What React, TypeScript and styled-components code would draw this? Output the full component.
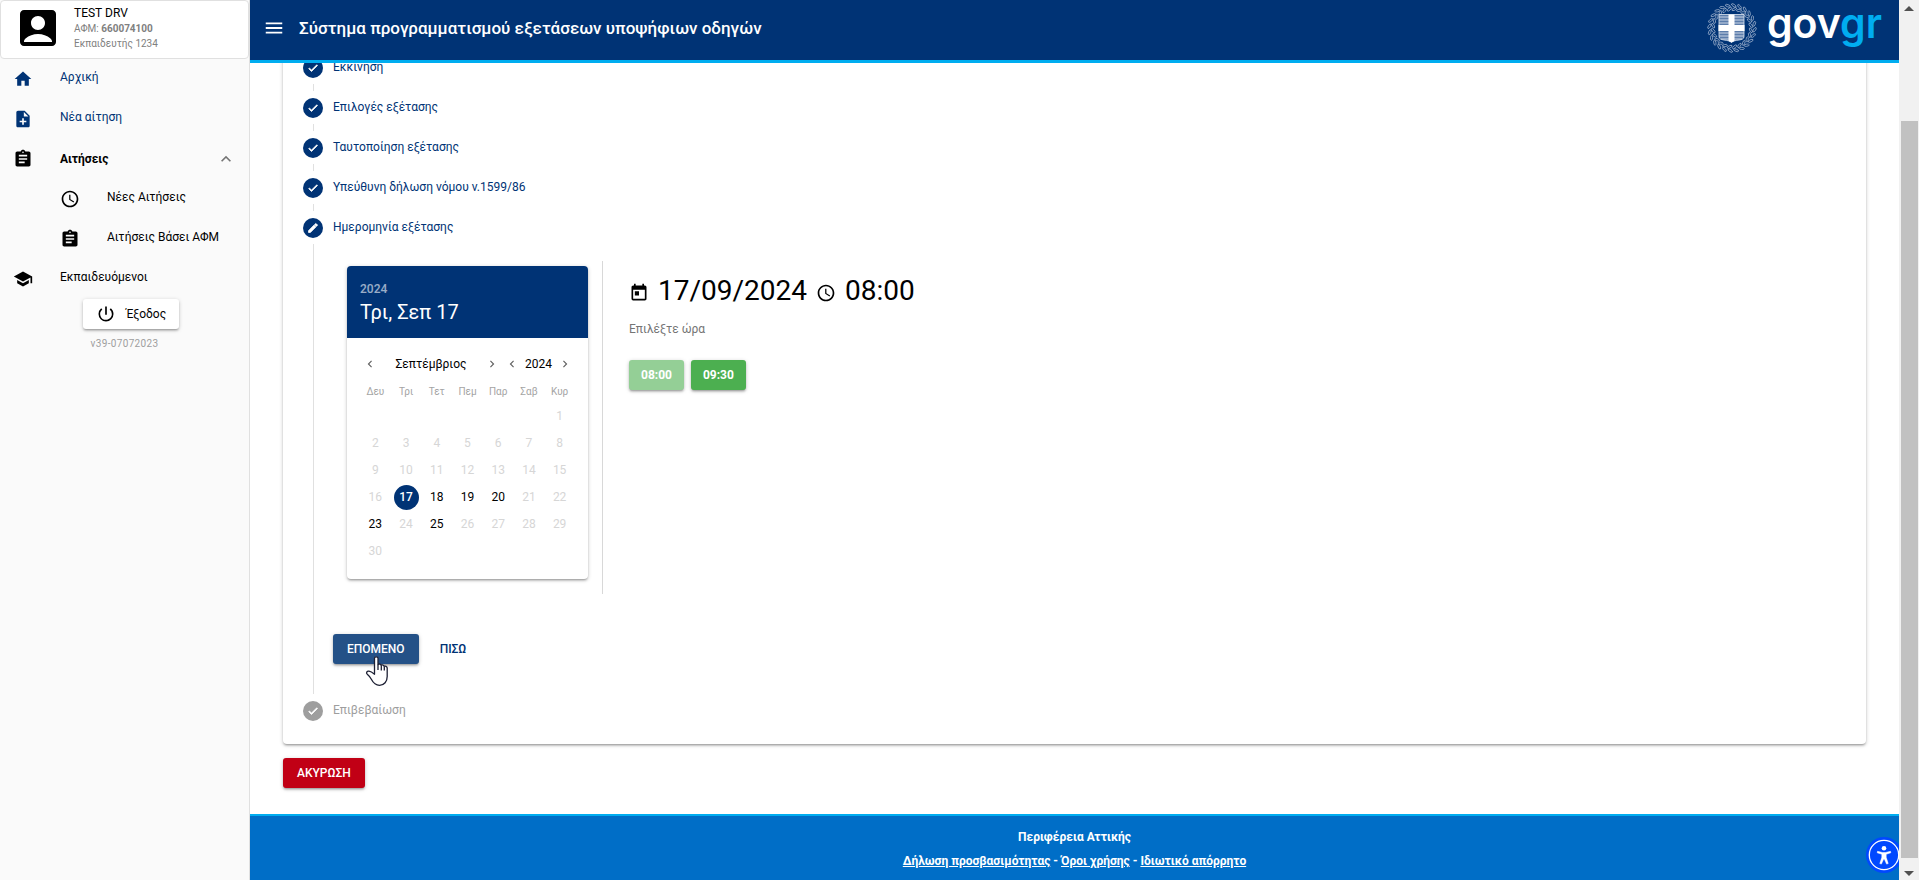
import React from "react";
import styled, { createGlobalStyle, css } from "styled-components";
import {
  MdAccountBox,
  MdAssignment,
  MdCheck,
  MdChevronLeft,
  MdChevronRight,
  MdEdit,
  MdExpandLess,
  MdHome,
  MdMenu,
  MdNoteAdd,
  MdPowerSettingsNew,
  MdSchedule,
  MdSchool,
  MdToday,
} from "react-icons/md";

const navy = "#003375";
const sky = "#00adf0";
const line = "#e0e0e0";
const raised =
  "0 1px 4px rgba(0,0,0,.2), 0 2px 2px rgba(0,0,0,.14), 0 2px 1px -1px rgba(0,0,0,.12)";

const GlobalStyle = createGlobalStyle`
  *, *::before, *::after { box-sizing: border-box; }
  body {
    margin: 0;
    font-family: Roboto, "Liberation Sans", sans-serif;
    font-size: 12px;
    line-height: 18px;
    color: #000;
    background: #fff;
  }
  button { font: inherit; color: inherit; border: 0; background: none; padding: 0; cursor: pointer; }
  a { color: inherit; }
  h1, h2, p { margin: 0; }
  svg { display: block; flex: none; }
`;

const Shell = styled.div`
  display: flex;
  height: 100vh;
  overflow: hidden;
`;

/* ---------- sidebar ---------- */

const Sidebar = styled.aside`
  flex: none;
  width: 250px;
  background: #fafafa;
  border-right: 1px solid ${line};
`;

const UserCard = styled.div`
  display: flex;
  align-items: center;
  gap: 12px;
  height: 59px;
  padding: 0 0 3px 13px;
  background: #fff;
  border: 1px solid ${line};
  border-radius: 4px;
`;

const UserName = styled.div`
  line-height: 16px;
`;

const UserMeta = styled.div`
  font-size: 10px;
  line-height: 15px;
  color: #808080;
`;

const NavLink = styled.a<{ $tone?: "navy" | "strong"; $nested?: boolean }>`
  display: flex;
  align-items: center;
  gap: 27px;
  height: 40px;
  padding: 0 13px 0 ${(p) => (p.$nested ? 60 : 13)}px;
  text-decoration: none;
  color: ${(p) => (p.$tone === "navy" ? navy : "#000")};
  font-weight: ${(p) => (p.$tone === "strong" ? 700 : 400)};
`;

const NavText = styled.span<{ $centered?: boolean }>`
  flex: 1;
  padding-bottom: ${(p) => (p.$centered ? 0 : 4)}px;
`;

const Chevron = styled(MdExpandLess)`
  color: #757575;
`;

const LogoutArea = styled.div`
  display: flex;
  flex-direction: column;
  align-items: center;
  margin-left: 13px;
`;

const LogoutButton = styled.button`
  display: flex;
  align-items: center;
  gap: 10px;
  height: 30px;
  padding: 0 13px;
  background: #fff;
  border-radius: 3px;
  box-shadow: ${raised};
`;

const Version = styled.div`
  margin-top: 6px;
  margin-right: 13px;
  font-size: 10px;
  letter-spacing: 0.03333em;
  color: #9e9e9e;
`;

/* ---------- main column ---------- */

const Column = styled.div`
  position: relative;
  flex: 1;
  min-width: 0;
  display: flex;
  flex-direction: column;
  overflow: hidden;
`;

const TopBar = styled.header`
  flex: none;
  display: flex;
  align-items: center;
  gap: 14px;
  height: 63px;
  padding: 0 17px 4px 13px;
  background: ${navy};
  border-bottom: 3px solid ${sky};
  color: #fff;
`;

const Title = styled.h1`
  flex: 1;
  font-size: 17px;
  line-height: 24px;
  font-weight: 500;
`;

const Brand = styled.div`
  display: flex;
  align-items: center;
  gap: 10px;
`;

const Wordmark = styled.div`
  padding-bottom: 10px;
  font-family: Inter, sans-serif;
  font-size: 41px;
  line-height: 46px;
  font-weight: 600;
  span { color: ${sky}; }
`;

/* The page is scrolled to its end, so content hangs from the bottom edge. */
const Viewport = styled.main`
  flex: 1;
  min-height: 0;
  display: flex;
  flex-direction: column;
  justify-content: flex-end;
  overflow: hidden;
  padding: 0 33px 26px;
`;

const Card = styled.section`
  flex: none;
  margin-bottom: 14px;
  padding: 20px 20px 13px;
  border-radius: 4px;
  box-shadow: ${raised};
`;

const StepHead = styled.div<{ $muted?: boolean }>`
  display: flex;
  align-items: center;
  gap: 10px;
  height: 40px;
  color: ${(p) => (p.$muted ? "#9e9e9e" : navy)};
`;

const StepDot = styled.span<{ $muted?: boolean }>`
  display: flex;
  align-items: center;
  justify-content: center;
  width: 20px;
  height: 20px;
  border-radius: 50%;
  color: #fff;
  background: ${(p) => (p.$muted ? "#9e9e9e" : navy)};
  path:last-child { stroke: #fff; stroke-width: 1.5; }
`;

const StepText = styled.span`
  padding-bottom: 2px;
`;

const StepItem = styled.div`
  position: relative;
  &:not(:last-child)::after {
    content: "";
    position: absolute;
    left: 10px;
    top: 36px;
    bottom: -3px;
    width: 1px;
    background: ${line};
  }
`;

const StepBody = styled.div`
  padding: 13px 0 27px 30px;
`;

const Booking = styled.div`
  display: flex;
`;

const DateSide = styled.div`
  padding: 5px 14px 15px;
  border-right: 1px solid #d8d8d8;
`;

const Picker = styled.div`
  width: 241px;
  border-radius: 4px;
  box-shadow: ${raised};
`;

const PickerHead = styled.div`
  height: 72px;
  padding: 14px 13px;
  border-radius: 4px 4px 0 0;
  background: ${navy};
  color: #fff;
`;

const PickerYear = styled.div`
  font-weight: 500;
  opacity: 0.6;
`;

const PickerDate = styled.div`
  font-size: 20px;
  line-height: 28px;
`;

const PickerBody = styled.div`
  padding: 13px 13px 14px;
`;

const PickerNav = styled.div`
  display: flex;
  align-items: center;
  height: 26px;
`;

const ArrowButton = styled.button`
  display: flex;
  justify-content: center;
  width: 20px;
  color: #616161;
`;

const NavLabel = styled.button<{ $grow?: boolean }>`
  ${(p) => (p.$grow ? css`flex: 1;` : css`width: 33px;`)}
`;

const Week = styled.div`
  display: grid;
  grid-template-columns: repeat(7, 1fr);
`;

const WeekDay = styled.span`
  height: 26px;
  text-align: center;
  font-size: 10px;
  line-height: 30px;
  color: #a4a4a4;
`;

const DayCell = styled.div`
  display: flex;
  align-items: center;
  justify-content: center;
  height: 27px;
`;

const Day = styled.button<{ $picked?: boolean }>`
  width: 25px;
  height: 25px;
  border-radius: 50%;
  line-height: 25px;
  &:disabled { color: #d6d6d6; cursor: default; }
  ${(p) =>
    p.$picked &&
    css`
      background: ${navy};
      color: #fff;
      font-weight: 500;
    `}
`;

const TimeSide = styled.div`
  padding: 13px 0 0 26px;
`;

const Chosen = styled.h2`
  display: flex;
  align-items: center;
  gap: 9px;
  font-size: 28px;
  line-height: 34px;
  font-weight: 400;
  svg { margin-top: 4px; }
`;

const Hint = styled.p`
  margin: 12px 0 22px;
  color: #757575;
`;

const Row = styled.div<{ $gap: number }>`
  display: flex;
  gap: ${(p) => p.$gap}px;
`;

const Button = styled.button<{ $fill?: string; $slot?: boolean }>`
  position: relative;
  height: 30px;
  padding: 0 ${(p) => (p.$slot ? 12 : 14)}px;
  border-radius: 3px;
  font-weight: ${(p) => (p.$slot ? 700 : 500)};
  color: ${(p) => (p.$fill ? "#fff" : navy)};
  background: ${(p) => p.$fill ?? "transparent"};
  box-shadow: ${(p) => (p.$fill ? raised : "none")};
`;

const StepActions = styled(Row)`
  margin-top: 40px;
`;

const Pointer = styled.svg`
  position: absolute;
  left: 32px;
  top: 22px;
  z-index: 1;
`;

const Footer = styled.footer`
  flex: none;
  height: 66px;
  padding-top: 12px;
  border-top: 2px solid ${sky};
  background: #006ec7;
  color: #fff;
  text-align: center;
  font-weight: 700;
  line-height: 18px;
  p + p { margin-top: 6px; }
`;

const AccessButton = styled.button`
  position: absolute;
  right: -3px;
  bottom: 7px;
  width: 36px;
  height: 36px;
`;

const ScrollTrack = styled.div`
  flex: none;
  display: flex;
  flex-direction: column;
  align-items: center;
  width: 20px;
  padding: 6px 0 4px;
  background: #f1f1f1;
`;

const ScrollThumb = styled.div`
  flex: 1;
  width: 17px;
  margin: 110px 0 13px;
  background: #c1c1c1;
`;

/* ---------- drawings ---------- */

const LEAVES = Array.from({ length: 24 }, (_, i) => i * 15 + 7);

function Emblem() {
  return (
    <svg width="50" height="50" viewBox="0 0 50 50" aria-label="Ελληνική Δημοκρατία">
      <g fill="none" stroke="#a9bad3" strokeWidth="0.7">
        {LEAVES.map((a) => (
          <g key={a} transform={`rotate(${a} 25 25)`}>
            <ellipse cx="24" cy="2.4" rx="2.6" ry="1.1" transform="rotate(28 24 2.4)" />
            <ellipse cx="25" cy="6" rx="2.6" ry="1.1" transform="rotate(-32 25 6)" />
          </g>
        ))}
      </g>
      <path d="M12 11.500h25v22c0 2.500-2 3-5 3.500-4 .5-6 1-7.500 2.500-1.500-1.500-3.500-2-7.500-2.500-3-.5-5-1-5-3.500z" fill="#5c7dab" stroke="#dfe7f1" strokeWidth="0.8" />
      <path d="M12 14h25M12 17h25M12 20h25M12 30h25M12 33h25M14 36h21" stroke="#c9d5e5" strokeWidth="1" />
      <path d="M21.500 11.500h6v10.500h10v6h-10v10l-3 1.500-3-1.500V28h-10v-6h10z" fill="#fff" />
    </svg>
  );
}

function HandPointer() {
  return (
    <Pointer width="24" height="31" viewBox="0 0 24 31" aria-hidden="true">
      <path
        d="M9.500 2.200c0-1.900 3.500-1.900 3.500 0v6.300c.8-.9 3-.6 3.200.8.900-.7 2.800-.3 3 1 1-.6 3 0 3 1.700v8.500c0 5-3 8.800-7.700 8.800-4.200 0-6.300-2.500-8-5.800-1-2-2.200-3.600-4.200-5.300-1.600-1.300-.4-3.300 1.700-3 2 .3 3.600 1.500 5.500 3z"
        fill="#fff"
        stroke="#1c1f33"
        strokeWidth="1.3"
        strokeLinejoin="round"
      />
      <path d="M13 8.500v5.500M16.300 9.500v5M19.300 10.500v4" stroke="#1c1f33" strokeWidth="1.3" fill="none" />
    </Pointer>
  );
}

function AccessIcon() {
  return (
    <svg width="36" height="36" viewBox="0 0 36 36" aria-hidden="true">
      <circle cx="18" cy="18" r="18" fill="#0048ff" />
      <circle cx="18" cy="18" r="14.7" fill="none" stroke="#fff" strokeWidth="1.3" />
      <circle cx="18" cy="11.3" r="2.3" fill="#fff" />
      <path d="M11.500 14.300l5 1.200h3l5-1.200.3 1.500-4.600 1.500v3l2 6.200-1.600.6L18.300 22h-.6l-2.300 5.100-1.600-.6 2-6.200v-3l-4.600-1.500z" fill="#fff" stroke="#fff" strokeWidth="0.5" />
    </svg>
  );
}

/* ---------- page ---------- */

const DONE = ["Εκκίνηση", "Επιλογές εξέτασης", "Ταυτοποίηση εξέτασης", "Υπεύθυνη δήλωση νόμου ν.1599/86"];
const WEEKDAYS = ["Δευ", "Τρι", "Τετ", "Πεμ", "Παρ", "Σαβ", "Κυρ"];
const OPEN_DAYS = [17, 18, 19, 20, 23, 25];
const CELLS = Array.from({ length: 36 }, (_, i) => (i < 6 ? null : i - 5));

function Calendar() {
  return (
    <Picker>
      <PickerHead>
        <PickerYear>2024</PickerYear>
        <PickerDate>Τρι, Σεπ 17</PickerDate>
      </PickerHead>
      <PickerBody>
        <PickerNav>
          <ArrowButton aria-label="Προηγούμενος μήνας"><MdChevronLeft size={14} /></ArrowButton>
          <NavLabel $grow>Σεπτέμβριος</NavLabel>
          <ArrowButton aria-label="Επόμενος μήνας"><MdChevronRight size={14} /></ArrowButton>
          <ArrowButton aria-label="Προηγούμενο έτος"><MdChevronLeft size={14} /></ArrowButton>
          <NavLabel>2024</NavLabel>
          <ArrowButton aria-label="Επόμενο έτος"><MdChevronRight size={14} /></ArrowButton>
        </PickerNav>
        <Week>
          {WEEKDAYS.map((d) => <WeekDay key={d}>{d}</WeekDay>)}
          {CELLS.map((d, i) => (
            <DayCell key={i}>
              {d && <Day $picked={d === 17} disabled={!OPEN_DAYS.includes(d)}>{d}</Day>}
            </DayCell>
          ))}
        </Week>
      </PickerBody>
    </Picker>
  );
}

export default function App() {
  return (
    <>
      <GlobalStyle />
      <Shell>
        <Sidebar>
          <UserCard>
            <MdAccountBox size={48} />
            <div>
              <UserName>TEST DRV</UserName>
              <UserMeta>ΑΦΜ: <b>660074100</b></UserMeta>
              <UserMeta>Εκπαιδευτής 1234</UserMeta>
            </div>
          </UserCard>
          <nav>
            <NavLink href="#home" $tone="navy"><MdHome size={20} /><NavText>Αρχική</NavText></NavLink>
            <NavLink href="#new" $tone="navy"><MdNoteAdd size={20} /><NavText>Νέα αίτηση</NavText></NavLink>
            <NavLink href="#requests" $tone="strong">
              <MdAssignment size={20} /><NavText $centered>Αιτήσεις</NavText><Chevron size={20} />
            </NavLink>
            <NavLink href="#recent" $nested><MdSchedule size={20} /><NavText>Νέες Αιτήσεις</NavText></NavLink>
            <NavLink href="#by-afm" $nested><MdAssignment size={20} /><NavText>Αιτήσεις Βάσει ΑΦΜ</NavText></NavLink>
            <NavLink href="#trainees"><MdSchool size={20} /><NavText>Εκπαιδευόμενοι</NavText></NavLink>
          </nav>
          <LogoutArea>
            <LogoutButton><MdPowerSettingsNew size={20} />Έξοδος</LogoutButton>
            <Version>v39-07072023</Version>
          </LogoutArea>
        </Sidebar>

        <Column>
          <TopBar>
            <button aria-label="Μενού"><MdMenu size={22} /></button>
            <Title>Σύστημα προγραμματισμού εξετάσεων υποψήφιων οδηγών</Title>
            <Brand>
              <Emblem />
              <Wordmark>gov<span>gr</span></Wordmark>
            </Brand>
          </TopBar>

          <Viewport>
            <Card>
              {DONE.map((label) => (
                <StepItem key={label}>
                  <StepHead><StepDot><MdCheck size={12} /></StepDot><StepText>{label}</StepText></StepHead>
                </StepItem>
              ))}
              <StepItem>
                <StepHead><StepDot><MdEdit size={12} /></StepDot><StepText>Ημερομηνία εξέτασης</StepText></StepHead>
                <StepBody>
                  <Booking>
                    <DateSide><Calendar /></DateSide>
                    <TimeSide>
                      <Chosen>
                        <MdToday size={20} /> 17/09/2024 <MdSchedule size={20} /> 08:00
                      </Chosen>
                      <Hint>Επιλέξτε ώρα</Hint>
                      <Row $gap={7}>
                        <Button $fill="#94cf96" $slot>08:00</Button>
                        <Button $fill="#4caf50" $slot>09:30</Button>
                      </Row>
                    </TimeSide>
                  </Booking>
                  <StepActions $gap={7}>
                    <Button $fill="#245187">ΕΠΟΜΕΝΟ<HandPointer /></Button>
                    <Button>ΠΙΣΩ</Button>
                  </StepActions>
                </StepBody>
              </StepItem>
              <StepItem>
                <StepHead $muted><StepDot $muted><MdCheck size={12} /></StepDot><StepText>Επιβεβαίωση</StepText></StepHead>
              </StepItem>
            </Card>
            <Row $gap={7}>
              <Button $fill="#c10015">ΑΚΥΡΩΣΗ</Button>
            </Row>
          </Viewport>

          <Footer>
            <p>Περιφέρεια Αττικής</p>
            <p>
              <a href="#accessibility">Δήλωση προσβασιμότητας</a> - <a href="#terms">Όροι χρήσης</a> - <a href="#privacy">Ιδιωτικό απόρρητο</a>
            </p>
          </Footer>
          <AccessButton aria-label="Προσβασιμότητα"><AccessIcon /></AccessButton>
        </Column>

        <ScrollTrack aria-hidden="true">
          <svg width="10" height="5" viewBox="0 0 10 5"><path d="M5 0l5 5H0z" fill="#505050" /></svg>
          <ScrollThumb />
          <svg width="10" height="5" viewBox="0 0 10 5"><path d="M0 0h10L5 5z" fill="#505050" /></svg>
        </ScrollTrack>
      </Shell>
    </>
  );
}
